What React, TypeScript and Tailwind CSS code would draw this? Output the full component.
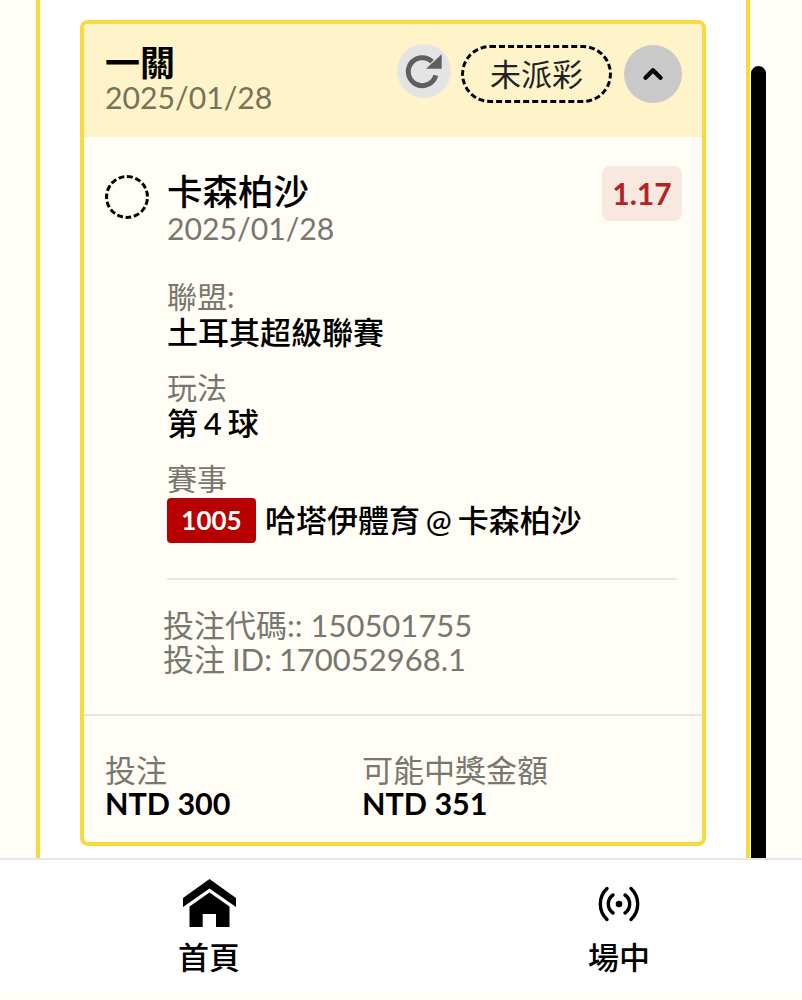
import { ChevronUp } from 'lucide-react'

const cjk = "font-['Lato','Noto_Sans_CJK_TC',sans-serif]"

function Field({ label, value }: { label: string; value: string }) {
  return (
    <div className="mb-[19px]">
      <p className="text-[30px] leading-9 text-[#77776f]">{label}</p>
      <p className="text-[31px] leading-9 font-medium text-black [word-spacing:-2px]">{value}</p>
    </div>
  )
}

export default function App() {
  return (
    <div className={`relative h-[1000px] w-[802px] overflow-hidden bg-[#fffdf5] ${cjk}`}>
      <div className="h-[858px] pl-9 pr-[52px]">
        <div className="h-full border-x-4 border-[#f8da3c] bg-white px-10 pt-5">
          <div className="h-[826px] overflow-hidden rounded-lg border-4 border-[#f8da3c] bg-[#fffdf5]">
            {/* Header */}
            <div className="flex h-[113px] items-start justify-between bg-[#fff3c9] pl-[21px] pr-5 pt-5">
              <div>
                <h2 className="text-[35px] leading-9 font-bold text-black">一關</h2>
                <p className="text-[30.2px] leading-[34px] text-[#77725a]">2025/01/28</p>
              </div>
              <div className="flex items-center">
                <button className="mb-[6px] flex h-[54px] w-[54px] items-center justify-center rounded-full bg-[#e4e4e4]">
                  <svg width="54" height="54" viewBox="0 0 54 54" fill="none">
                    <path d="M38.8 31.3A14 14 0 1 1 35 17.6" stroke="#5f5f5f" strokeWidth="5" />
                    <path d="M44.7 10.3V24.7H29z" fill="#5f5f5f" />
                  </svg>
                </button>
                <span className="ml-[10px] flex h-[58px] w-[151px] items-center justify-center rounded-full border-[3px] border-dashed border-black text-[31px] text-[#222]">
                  未派彩
                </span>
                <button className="ml-3 flex h-[58px] w-[58px] items-center justify-center rounded-full bg-[#c9c9c9]">
                  <ChevronUp size={30} strokeWidth={3.5} color="#000" />
                </button>
              </div>
            </div>

            {/* Selection */}
            <div className="h-[579px] border-b-2 border-[#e7e6e0] pl-[21px] pr-5 pt-[29px]">
              <div className="flex items-start">
                <span className="mt-[9px] h-[44px] w-[44px] shrink-0 rounded-full border-[3px] border-dashed border-black" />
                <div className="ml-[18px] flex-1">
                  <h3 className="mt-[3px] text-[35.5px] leading-[46px] font-medium text-black">卡森柏沙</h3>
                  <p className="-mt-[4px] text-[30.2px] leading-[34px] text-[#77776f]">2025/01/28</p>
                </div>
                <span className="flex h-[55px] w-20 items-center justify-center rounded-lg bg-[#f8e8e0] text-[30px] font-bold text-[#b32424]">
                  1.17
                </span>
              </div>

              <div className="ml-[62px] mt-[33px]">
                <Field label="聯盟:" value="土耳其超級聯賽" />
                <Field label="玩法" value="第 4 球" />
                <p className="text-[30px] leading-9 text-[#77776f]">賽事</p>
                <div className="mt-px flex items-center">
                  <span className="flex h-[45px] w-[89px] items-center justify-center rounded bg-[#b80000] text-[26px] font-bold text-white">
                    1005
                  </span>
                  <span className="ml-[9px] text-[31px] font-medium text-black [word-spacing:-2px]">哈塔伊體育 @ 卡森柏沙</span>
                </div>
                <div className="mr-[5px] mt-[34px] border-t-2 border-[#e7e6e0]" />
                <div className="-ml-1 mt-7 text-[31px] leading-[34px] text-[#77776f]">
                  <p>投注代碼:: 150501755</p>
                  <p className="[word-spacing:-1px]">投注 ID: 170052968.1</p>
                </div>
              </div>
            </div>

            {/* Stake */}
            <div className="flex pl-[21px] pt-[37px]">
              <div className="w-[257px]">
                <p className="text-[31px] leading-[34px] text-[#77776f]">投注</p>
                <p className="text-[30.5px] leading-[32px] font-bold text-black">NTD 300</p>
              </div>
              <div>
                <p className="text-[31px] leading-[34px] text-[#77776f]">可能中獎金額</p>
                <p className="text-[30.5px] leading-[32px] font-bold text-black">NTD 351</p>
              </div>
            </div>
          </div>
        </div>
      </div>

      {/* Scrollbar */}
      <div className="absolute left-[751px] top-[66px] h-[792px] w-[15px] rounded-t-lg bg-black" />

      {/* Bottom nav */}
      <nav className="flex h-[134px] border-t-2 border-[#e8e8e8] bg-white">
        <a className="ml-[149px] flex w-[120px] flex-col items-center pt-[19px]">
          <svg width="55" height="49" viewBox="0 0 55 49" fill="#000">
            <path d="M27.5 0 54 19v9L27.5 9.5 1 28v-9z" />
            <path fillRule="evenodd" d="M27.5 13.5 47.5 27.5V48H34V35H20.7V48H7.5V27.5z" />
          </svg>
          <span className="mt-[6px] text-[31px] leading-[46px] font-medium text-black">首頁</span>
        </a>
        <a className="ml-[290px] flex w-[120px] flex-col items-center pt-[26px]">
          <svg width="44" height="36" viewBox="0 0 44 36" fill="none" stroke="#000" strokeWidth="3.4" strokeLinecap="round">
            <circle cx="22" cy="18" r="3.3" fill="#000" stroke="none" />
            <path d="M16 9A11 11 0 0 0 16 27M28 9A11 11 0 0 1 28 27M10 2.5A21.3 21.3 0 0 0 10 33.5M34 2.5A21.3 21.3 0 0 1 34 33.5" />
          </svg>
          <span className="mt-[12px] text-[31px] leading-[46px] font-medium text-black">場中</span>
        </a>
      </nav>
    </div>
  )
}
